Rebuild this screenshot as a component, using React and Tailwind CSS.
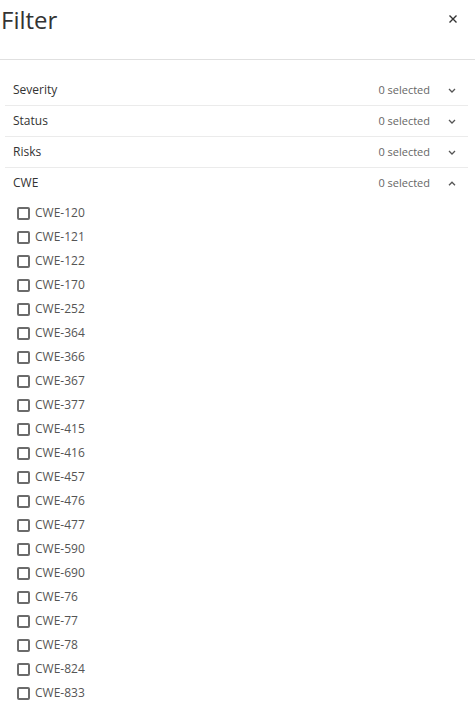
import { useState } from 'react';

const sections = ['Severity', 'Status', 'Risks', 'CWE'];

const cweList = [
  'CWE-120', 'CWE-121', 'CWE-122', 'CWE-170', 'CWE-252', 'CWE-364', 'CWE-366',
  'CWE-367', 'CWE-377', 'CWE-415', 'CWE-416', 'CWE-457', 'CWE-476', 'CWE-477',
  'CWE-590', 'CWE-690', 'CWE-76', 'CWE-77', 'CWE-78', 'CWE-824', 'CWE-833',
];

function Chevron({ up }) {
  return (
    <svg width="8" height="5" viewBox="0 0 8 5" className="text-[#555]">
      <path
        d={up ? 'M1 4.2 L4 1.2 L7 4.2' : 'M1 1 L4 4 L7 1'}
        fill="none"
        stroke="currentColor"
        strokeWidth="1.3"
      />
    </svg>
  );
}

export default function App() {
  const [open, setOpen] = useState('CWE');
  const [checked, setChecked] = useState({});

  return (
    <div className="w-[475px] h-[709px] overflow-hidden bg-white text-[#333]" style={{ fontFamily: '"Open Sans", sans-serif' }}>
      {/* Header */}
      <div className="flex items-start justify-between h-[60px] border-b border-[#e0e0e0]">
        <h1 className="text-[24px] leading-[40px] pl-[1px] font-normal text-[#333]">Filter</h1>
        <button className="mt-[14px] mr-[17px] text-[#333]">
          <svg width="10" height="10" viewBox="0 0 10 10">
            <path d="M1.5 1.5 L8.5 8.5 M8.5 1.5 L1.5 8.5" stroke="currentColor" strokeWidth="1.4" />
          </svg>
        </button>
      </div>

      {/* Sections */}
      <div className="pt-[15px] pl-[5px] pr-[7px]">
        {sections.map((s, i) => (
          <div key={s} className={i < sections.length - 1 ? 'border-b border-[#ebebeb]' : ''}>
            <button
              onClick={() => setOpen(open === s ? null : s)}
              className="w-full h-[30px] flex items-center pl-[8px] text-left"
            >
              <span className="flex-1 text-[12px] text-[#333]">{s}</span>
              <span className="text-[11px] text-[#666] mr-[18px]">0 selected</span>
              <span className="w-[13px] mr-[7px] flex justify-start">
                <Chevron up={open === s} />
              </span>
            </button>
            {open === s && s === 'CWE' && (
              <div className="pt-[3px] pl-[12px]">
                {cweList.map((c) => (
                  <label key={c} className="flex items-center h-[24px] gap-[5px] cursor-pointer">
                    <span
                      onClick={() => setChecked({ ...checked, [c]: !checked[c] })}
                      className={`w-[13px] h-[13px] rounded-[2px] border-2 border-[#6b6b6b] ${checked[c] ? 'bg-[#6b6b6b]' : ''}`}
                    />
                    <span className="text-[12px] text-[#555]">{c}</span>
                  </label>
                ))}
              </div>
            )}
          </div>
        ))}
      </div>
    </div>
  );
}
